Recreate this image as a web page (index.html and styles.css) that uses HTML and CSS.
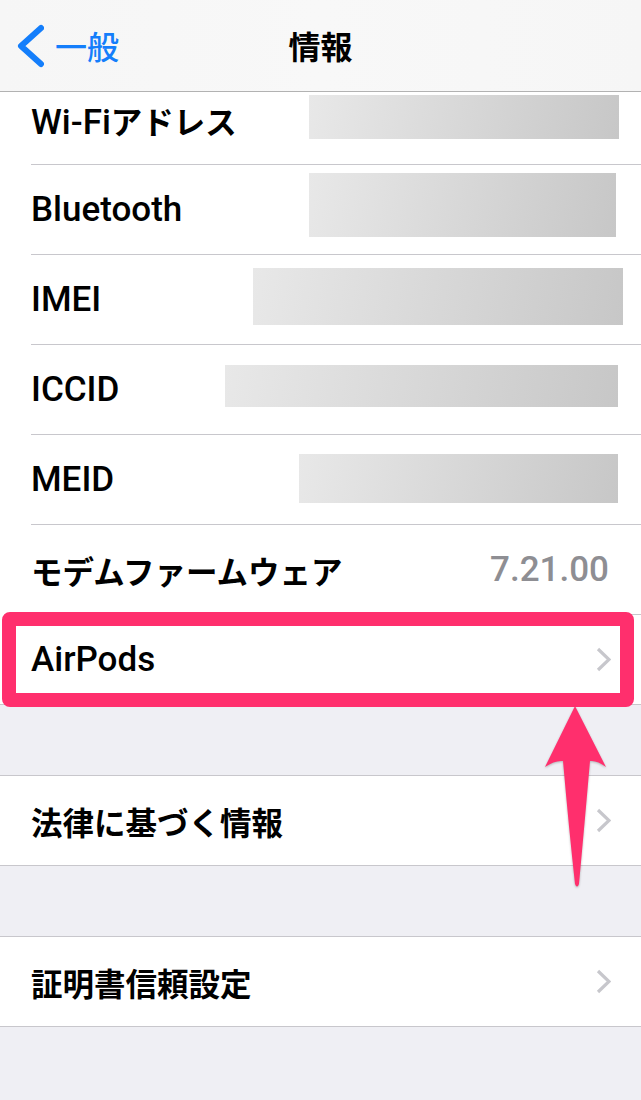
FILE: index.html
```html
<!DOCTYPE html>
<html lang="ja">
<head>
    <meta charset="UTF-8">
    <meta name="viewport" content="width=device-width, initial-scale=1.0">
    <title>情報</title>
    <link rel="stylesheet" href="styles.css">
</head>
<body>
    <!-- Navigation bar -->
    <header class="navbar">
        <a class="back" href="#">
            <svg class="back-icon" width="30" height="46" viewBox="14 25 30 46">
                <polyline points="41,30 21,48 41,66" />
            </svg>
            <span>一般</span>
        </a>
        <h1 class="title">情報</h1>
        <div></div>
    </header>

    <!-- Settings list -->
    <main class="viewport">
        <div class="list">
            <section class="group">
                <div class="cell">
                    <div class="cell-inner">
                        <span class="label">Wi-Fi<span class="ja">アドレス</span></span>
                    </div>
                    <div class="mask mask-wifi"></div>
                </div>
                <div class="cell">
                    <div class="cell-inner">
                        <span class="label">Bluetooth</span>
                    </div>
                    <div class="mask mask-bt"></div>
                </div>
                <div class="cell">
                    <div class="cell-inner">
                        <span class="label">IMEI</span>
                    </div>
                    <div class="mask mask-imei"></div>
                </div>
                <div class="cell">
                    <div class="cell-inner">
                        <span class="label">ICCID</span>
                    </div>
                    <div class="mask mask-iccid"></div>
                </div>
                <div class="cell">
                    <div class="cell-inner">
                        <span class="label">MEID</span>
                    </div>
                    <div class="mask mask-meid"></div>
                </div>
                <div class="cell">
                    <div class="cell-inner">
                        <span class="label ja">モデムファームウェア</span>
                        <span class="value">7.21.00</span>
                    </div>
                </div>
                <div class="cell">
                    <div class="cell-inner">
                        <span class="label">AirPods</span>
                        <svg class="chevron" width="15" height="25" viewBox="0 0 15 25"><polyline points="2,2 13,12.5 2,23" /></svg>
                    </div>
                </div>
            </section>

            <section class="group">
                <div class="cell">
                    <div class="cell-inner">
                        <span class="label ja">法律に基づく情報</span>
                        <svg class="chevron" width="15" height="25" viewBox="0 0 15 25"><polyline points="2,2 13,12.5 2,23" /></svg>
                    </div>
                </div>
            </section>

            <section class="group">
                <div class="cell">
                    <div class="cell-inner">
                        <span class="label ja">証明書信頼設定</span>
                        <svg class="chevron" width="15" height="25" viewBox="0 0 15 25"><polyline points="2,2 13,12.5 2,23" /></svg>
                    </div>
                </div>
            </section>
        </div>
    </main>

    <!-- Annotation: highlight box and arrow -->
    <div class="highlight-box"></div>
    <svg class="arrow" width="70" height="192" viewBox="540 700 70 192">
        <path d="M575 706 L606 767 Q597 760 590 761 Q584 830 579 884 Q577 889 575 884 Q569 830 563 761 Q555 760 545 767 Z" />
    </svg>
</body>
</html>
```

FILE: styles.css
```css
/* General Styles */
body {
    margin: 0;
    width: 641px;
    height: 1100px;
    overflow: hidden;
    position: relative;
    background-color: #efeff4;
    font-family: Roboto, "Noto Sans CJK JP", sans-serif;
    color: #000;
}

/* Navigation bar */
.navbar {
    height: 91px;
    border-bottom: 1px solid #b2b2b2;
    background: linear-gradient(90deg, #f6f6f6, #f8f8f8 50%, #f6f6f6);
    display: grid;
    grid-template-columns: 1fr auto 1fr;
    align-items: center;
}
.back {
    display: flex;
    align-items: center;
    color: #147efb;
    text-decoration: none;
    font-family: "Noto Sans CJK JP", sans-serif;
    font-size: 32px;
    font-weight: 500;
    padding-left: 14px;
}
.back span {
    margin-left: 11px;
    margin-top: -2px;
}
.back-icon polyline {
    fill: none;
    stroke: #147efb;
    stroke-width: 6;
    stroke-linecap: round;
    stroke-linejoin: round;
}
.title {
    margin: 0;
    font-family: "Noto Sans CJK JP", sans-serif;
    font-size: 32px;
    font-weight: 700;
    margin-top: -2px;
}

/* List */
.viewport {
    height: 1008px;
    overflow: hidden;
}
.list {
    margin-top: -18px;
}
.group {
    background-color: #fff;
    border-top: 1px solid #c8c7cc;
    border-bottom: 1px solid #c8c7cc;
    margin-bottom: 70px;
}
.cell {
    position: relative;
    padding-left: 31px;
}
.cell-inner {
    height: 89px;
    display: flex;
    align-items: center;
    justify-content: space-between;
    padding-right: 30px;
    border-bottom: 1px solid #c8c7cc;
}
.cell:last-child .cell-inner {
    border-bottom: none;
}
.label {
    font-size: 35px;
    font-weight: 500;
}
.ja {
    font-family: "Noto Sans CJK JP", sans-serif;
    font-size: 31.5px;
    font-weight: 700;
}
.value {
    font-size: 35px;
    font-weight: 500;
    color: #8e8e93;
    margin-right: 2px;
}
.chevron polyline {
    fill: none;
    stroke: #c7c7cc;
    stroke-width: 3.2;
}

/* Redacted values */
.mask {
    position: absolute;
    background: linear-gradient(100deg, #e8e8e8, #c7c7c7);
}
.mask-wifi { left: 309px; top: 20px; width: 310px; height: 44px; }
.mask-bt { left: 309px; top: 8px; width: 307px; height: 64px; }
.mask-imei { left: 253px; top: 13px; width: 370px; height: 57px; }
.mask-iccid { left: 225px; top: 20px; width: 393px; height: 42px; }
.mask-meid { left: 299px; top: 19px; width: 319px; height: 49px; }

/* Annotation */
.highlight-box {
    position: absolute;
    left: 2px;
    top: 612px;
    width: 604px;
    height: 67px;
    border: 14px solid #ff2f6d;
    border-radius: 8px;
}
.arrow {
    position: absolute;
    left: 540px;
    top: 700px;
}
.arrow path {
    fill: #ff2f6d;
    filter: drop-shadow(0 1px 1px rgba(0, 0, 0, 0.25));
}
```
